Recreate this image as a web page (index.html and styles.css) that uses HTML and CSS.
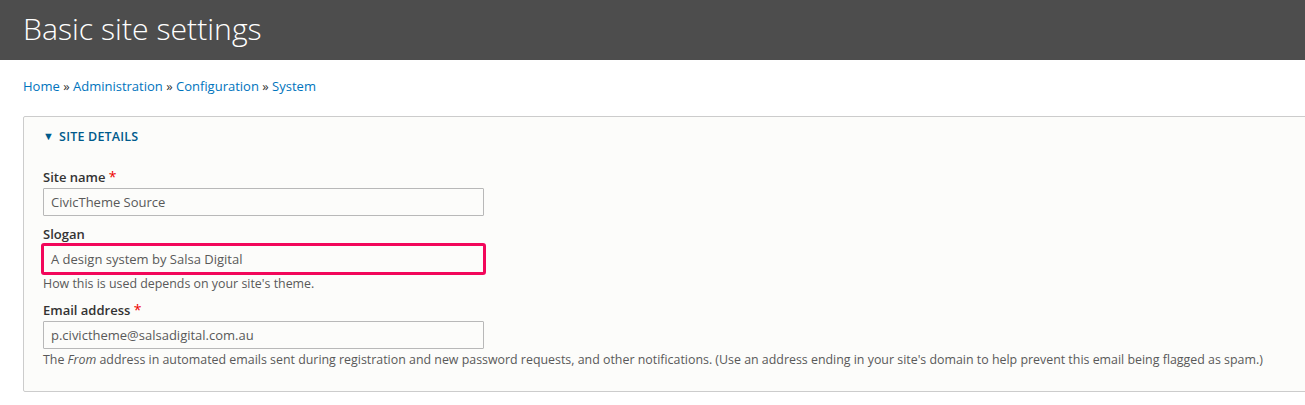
FILE: index.html
```html
<!DOCTYPE html>
<html>
<head>
<meta charset="utf-8">
<link rel="stylesheet" href="styles.css">
</head>
<body>
<header class="page-header">
  <h1 class="page-title">Basic site settings</h1>
</header>
<main class="content">
  <nav class="breadcrumb">
    <a href="#">Home</a> » <a href="#">Administration</a> » <a href="#">Configuration</a> » <a href="#">System</a>
  </nav>
  <section class="fieldset">
    <div class="legend"><span class="arrow">▼</span>SITE DETAILS</div>
    <div class="fieldset-body">
      <div class="field">
        <label class="label">Site name <span class="req">*</span></label>
        <div class="input">CivicTheme Source</div>
      </div>
      <div class="field">
        <label class="label">Slogan</label>
        <div class="input highlight">A design system by Salsa Digital</div>
        <div class="desc">How this is used depends on your site's theme.</div>
      </div>
      <div class="field">
        <label class="label">Email address <span class="req">*</span></label>
        <div class="input">p.civictheme@salsadigital.com.au</div>
        <div class="desc">The <em>From</em> address in automated emails sent during registration and new password requests, and other notifications. (Use an address ending in your site's domain to help prevent this email being flagged as spam.)</div>
      </div>
    </div>
  </section>
</main>
</body>
</html>
```
FILE: styles.css
```css
html, body {
  margin: 0;
  padding: 0;
  background: #ffffff;
  overflow: hidden;
}
body {
  font-family: "Open Sans", "Liberation Sans", sans-serif;
  color: #333333;
  width: 1305px;
  height: 405px;
}
.page-header {
  background: #4d4d4d;
  height: 60px;
  display: flex;
  align-items: center;
  padding-left: 23px;
}
.page-title {
  margin: 0;
  font-weight: 300;
  font-size: 30.2px;
  color: #ffffff;
  line-height: 1;
  padding-bottom: 1px;
}
.content {
  padding: 0 0 0 23px;
}
.breadcrumb {
  font-size: 13px;
  line-height: 18px;
  padding-top: 17px;
  color: #333;
}
.breadcrumb a {
  color: #0074bd;
  text-decoration: none;
}
.fieldset {
  margin-top: 21px;
  width: 1320px;
  height: 276px;
  box-sizing: border-box;
  border: 1px solid #cccccc;
  border-radius: 2px;
  background: #fcfcfa;
}
.legend {
  font-size: 12.5px;
  font-weight: 600;
  color: #005a8c;
  padding: 11px 0 0 19px;
  line-height: 18px;
  letter-spacing: 0.2px;
}
.arrow {
  display: inline-block;
  font-size: 11px;
  margin-right: 5px;
  position: relative;
  top: -1px;
}
.fieldset-body {
  padding: 22px 0 0 19px;
}
.field {
  margin-bottom: 9px;
}
.label {
  display: block;
  font-size: 13px;
  font-weight: 600;
  line-height: 18px;
  color: #333;
}
.req {
  color: #e00;
  font-weight: 400;
  font-size: 14px;
}
.input {
  margin-top: 2px;
  width: 441px;
  height: 28px;
  box-sizing: border-box;
  border: 1px solid #b8b8b8;
  border-radius: 1px;
  background: #fcfcfa;
  font-size: 13px;
  color: #595959;
  padding: 0 7px;
  line-height: 26px;
}
.input.highlight {
  border-color: #b8b8b8;
  outline: 3px solid #f2075a;
  outline-offset: -1px;
}
.desc {
  font-size: 12.4px;
  line-height: 17px;
  color: #595959;
  margin-top: 2px;
  margin-bottom: 3px;
}
```
